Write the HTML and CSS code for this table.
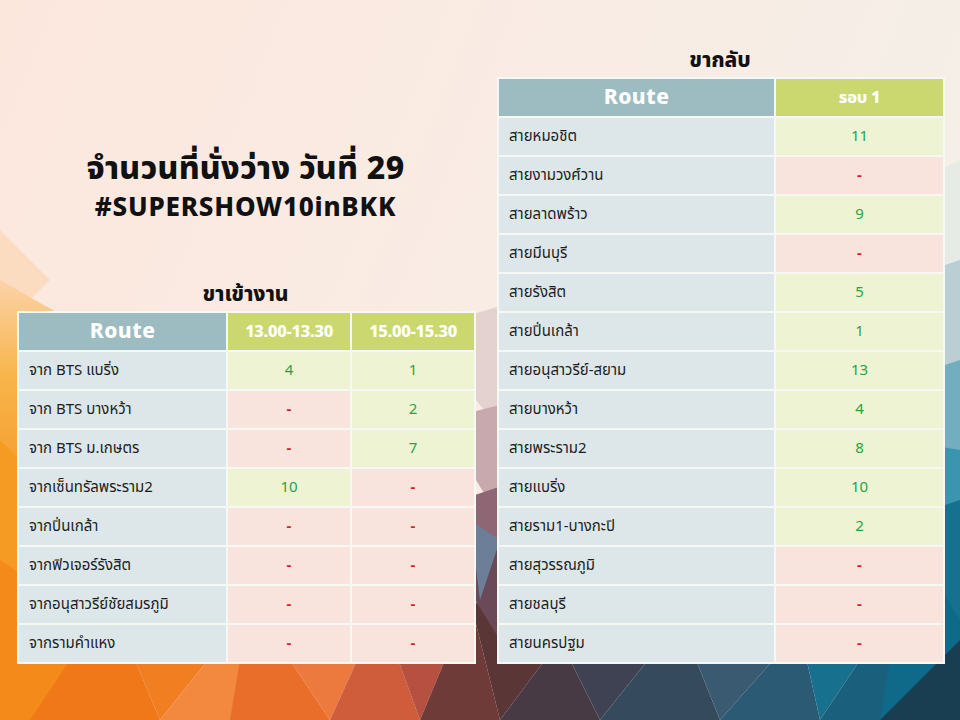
FILE: index.html
```html
<!DOCTYPE html>
<html lang="th">
<head>
<meta charset="utf-8">
<title>จำนวนที่นั่งว่าง วันที่ 29</title>
<link rel="stylesheet" href="styles.css">
</head>
<body>
<div class="slide">
  <svg class="bg" viewBox="0 0 960 720" preserveAspectRatio="none" aria-hidden="true">
    <defs>
      <linearGradient id="base" x1="0" y1="0" x2="1" y2="0.3">
        <stop offset="0" stop-color="#fce7dd"/>
        <stop offset="0.55" stop-color="#f9ece4"/>
        <stop offset="1" stop-color="#f4efe8"/>
      </linearGradient>
      <linearGradient id="leftg" x1="0" y1="0" x2="0" y2="1">
        <stop offset="0" stop-color="#fbd3a8"/>
        <stop offset="0.4" stop-color="#f8b54a"/>
        <stop offset="1" stop-color="#f49424"/>
      </linearGradient>
    </defs>
    <rect width="960" height="720" fill="url(#base)"/>
    <polygon points="0,230 50,280 0,330" fill="#fbdcc0"/>
    <polygon points="0,280 70,320 0,520" fill="url(#leftg)"/>
    <polygon points="0,440 60,500 0,720" fill="#f59a22"/>
    <polygon points="0,560 120,640 40,720 0,720" fill="#f38a1a"/>
    <polygon points="30,720 110,600 160,720" fill="#f07818"/>
    <polygon points="110,600 240,620 160,720" fill="#f27e22"/>
    <polygon points="160,720 240,620 240,720" fill="#f3893e"/>
    <polygon points="230,720 250,600 330,720" fill="#e96e2a"/>
    <polygon points="250,600 380,610 330,720" fill="#ec7a3e"/>
    <polygon points="330,720 380,610 420,720" fill="#cf5c3a"/>
    <polygon points="380,610 470,600 420,720" fill="#b65040"/>
    <polygon points="420,720 470,600 500,720" fill="#6e3b38"/>
    <polygon points="470,600 560,640 500,720" fill="#5a3636"/>
    <polygon points="500,720 560,640 600,720" fill="#483a44"/>
    <polygon points="560,640 680,620 600,720" fill="#3f4252"/>
    <polygon points="600,720 680,620 720,720" fill="#364a5e"/>
    <polygon points="680,620 800,630 720,720" fill="#3a5a72"/>
    <polygon points="720,720 800,630 820,720" fill="#2a5a74"/>
    <polygon points="800,630 900,600 820,720" fill="#16708e"/>
    <polygon points="820,720 900,600 900,720" fill="#1a607c"/>
    <polygon points="880,720 960,630 960,720" fill="#193e52"/>
    <polygon points="900,600 960,560 960,640 880,720" fill="#0f6a8a"/>
    <polygon points="420,330 520,300 500,430" fill="#e4d2d0"/>
    <polygon points="440,420 520,400 500,520" fill="#c7a9ae"/>
    <polygon points="460,500 520,480 500,590" fill="#8e6674"/>
    <polygon points="450,560 520,540 500,640" fill="#6a4a58"/>
    <polygon points="470,520 500,540 480,600" fill="#6d7f98"/>
    <polygon points="880,200 960,160 960,300" fill="#e6ebe6"/>
    <polygon points="900,280 960,260 960,400" fill="#b9cfd3"/>
    <polygon points="900,380 960,360 960,480" fill="#72aebf"/>
    <polygon points="900,440 960,450 960,580" fill="#3d94ae"/>
    <polygon points="900,520 960,500 960,620" fill="#17708f"/>
  </svg>

  <div class="content">
    <section class="col col-left">
      <h1 class="title">
        <span class="title-line">จำนวนที่นั่งว่าง วันที่ 29</span>
        <span class="title-sub">#SUPERSHOW10inBKK</span>
      </h1>
      <h2 class="section-head">ขาเข้างาน</h2>
      <table class="grid grid-left">
        <colgroup><col class="c-route-l"><col class="c-num-l"><col class="c-num-l"></colgroup>
        <thead>
          <tr><th class="h-route">Route</th><th class="h-time">13.00-13.30</th><th class="h-time">15.00-15.30</th></tr>
        </thead>
        <tbody>
          <tr><td class="route">จาก BTS แบริ่ง</td><td class="ok">4</td><td class="ok">1</td></tr>
          <tr><td class="route">จาก BTS บางหว้า</td><td class="no">-</td><td class="ok">2</td></tr>
          <tr><td class="route">จาก BTS ม.เกษตร</td><td class="no">-</td><td class="ok">7</td></tr>
          <tr><td class="route">จากเซ็นทรัลพระราม2</td><td class="ok">10</td><td class="no">-</td></tr>
          <tr><td class="route">จากปิ่นเกล้า</td><td class="no">-</td><td class="no">-</td></tr>
          <tr><td class="route">จากฟิวเจอร์รังสิต</td><td class="no">-</td><td class="no">-</td></tr>
          <tr><td class="route">จากอนุสาวรีย์ชัยสมรภูมิ</td><td class="no">-</td><td class="no">-</td></tr>
          <tr><td class="route">จากรามคำแหง</td><td class="no">-</td><td class="no">-</td></tr>
        </tbody>
      </table>
    </section>

    <section class="col col-right">
      <h2 class="section-head">ขากลับ</h2>
      <table class="grid grid-right">
        <colgroup><col class="c-route-r"><col class="c-num-r"></colgroup>
        <thead>
          <tr><th class="h-route">Route</th><th class="h-time">รอบ 1</th></tr>
        </thead>
        <tbody>
          <tr><td class="route">สายหมอชิต</td><td class="ok">11</td></tr>
          <tr><td class="route">สายงามวงศ์วาน</td><td class="no">-</td></tr>
          <tr><td class="route">สายลาดพร้าว</td><td class="ok">9</td></tr>
          <tr><td class="route">สายมีนบุรี</td><td class="no">-</td></tr>
          <tr><td class="route">สายรังสิต</td><td class="ok">5</td></tr>
          <tr><td class="route">สายปิ่นเกล้า</td><td class="ok">1</td></tr>
          <tr><td class="route">สายอนุสาวรีย์-สยาม</td><td class="ok">13</td></tr>
          <tr><td class="route">สายบางหว้า</td><td class="ok">4</td></tr>
          <tr><td class="route">สายพระราม2</td><td class="ok">8</td></tr>
          <tr><td class="route">สายแบริ่ง</td><td class="ok">10</td></tr>
          <tr><td class="route">สายราม1-บางกะปิ</td><td class="ok">2</td></tr>
          <tr><td class="route">สายสุวรรณภูมิ</td><td class="no">-</td></tr>
          <tr><td class="route">สายชลบุรี</td><td class="no">-</td></tr>
          <tr><td class="route">สายนครปฐม</td><td class="no">-</td></tr>
        </tbody>
      </table>
    </section>
  </div>
</div>
</body>
</html>
```

FILE: styles.css
```css
* { box-sizing: border-box; }

html, body {
  margin: 0;
  padding: 0;
}

body {
  font-family: "Noto Sans Thai", "Noto Sans", "DejaVu Sans", sans-serif;
  color: #1a1a1a;
}

.slide {
  position: relative;
  width: 960px;
  height: 720px;
  overflow: hidden;
}

.bg {
  position: absolute;
  inset: 0;
  width: 960px;
  height: 720px;
  z-index: 0;
}

.content {
  position: relative;
  z-index: 1;
  display: flex;
  gap: 23px;
  height: 720px;
  padding: 0 17px 56px 17px;
}

.col {
  display: flex;
  flex-direction: column;
  justify-content: flex-end;
}

.col-left { width: 457px; }
.col-right { width: 446px; }

.title {
  margin: 0 0 60px 0;
  display: flex;
  flex-direction: column;
  align-items: center;
  gap: 2px;
  font-weight: 800;
  color: #111;
}

.title-line {
  font-size: 32px;
  line-height: 40px;
  letter-spacing: 0.3px;
}

.title-sub {
  font-family: "Noto Sans", "Open Sans", sans-serif;
  font-size: 26px;
  line-height: 30px;
  letter-spacing: 0.8px;
}

.section-head {
  margin: 0 0 2px 0;
  text-align: center;
  font-size: 21px;
  line-height: 28px;
  font-weight: 800;
  color: #111;
}

.grid {
  border-collapse: collapse;
  table-layout: fixed;
  border: 2px solid #f6f8f4;
}

.grid-left { width: 457px; }
.grid-right { width: 446px; }

.c-route-l { width: 209px; }
.c-num-l { width: 124px; }
.c-route-r { width: 277px; }
.c-num-r { width: 169px; }

.grid th,
.grid td {
  height: 39px;
  padding: 0;
  border: 2px solid #f6f8f4;
  text-align: center;
  vertical-align: middle;
}

.h-route {
  background: #9cbcc2;
  color: #ffffff;
  font-size: 21px;
  font-weight: 800;
  letter-spacing: 0.5px;
}

.h-time {
  background: #cbd86f;
  color: #ffffff;
  font-size: 16.5px;
  font-weight: 800;
  letter-spacing: -0.3px;
}

.route {
  background: #dde7e9;
  text-align: left !important;
  padding-left: 10px !important;
  font-size: 15px;
  color: #1d1d1d;
}

.ok {
  background: #eef3d3;
  color: #1fa54a;
  font-size: 15px;
}

.no {
  background: #f8e3dd;
  color: #d21f2c;
  font-size: 15px;
  font-weight: 700;
}
```
